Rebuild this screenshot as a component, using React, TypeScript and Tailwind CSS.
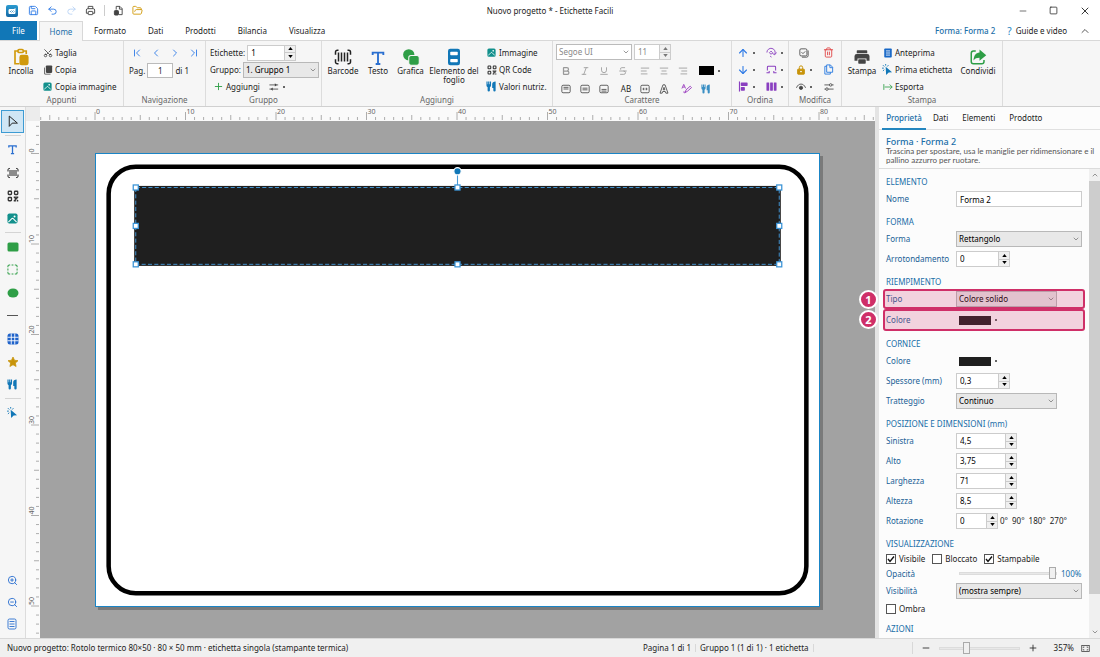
import { useState } from 'react';
import type { ReactNode } from 'react';
import {
  AlignCenter,
  AlignLeft,
  AlignRight,
  ArrowDown,
  ArrowUp,
  Bold,
  ChevronDown,
  ChevronFirst,
  ChevronLast,
  ChevronLeft,
  ChevronRight,
  ChevronUp,
  FolderOpen,
  Italic,
  Minus,
  Plus,
  Redo2,
  Save,
  Scissors,
  Square,
  Strikethrough,
  Trash2,
  Underline,
  Undo2,
  X,
  ZoomIn,
  ZoomOut,
} from 'lucide-react';

// ---------- Icons ----------

type IconProps = { className?: string };

const LogoIcon = () => (
  <svg viewBox="0 0 24 24" className="size-3">
    <defs>
      <linearGradient id="logo" x1="0" y1="0" x2="0" y2="1">
        <stop offset="0" stopColor="#2b9bd0" />
        <stop offset="1" stopColor="#1468a6" />
      </linearGradient>
    </defs>
    <rect width="24" height="24" rx="4" fill="url(#logo)" />
    <path d="M5 11c0-2 1-3 3-3h8l3-2v9c0 2-1 3-3 3H8c-2 0-3-1-3-3z" fill="#fff" />
    <path d="M8 14l3-3M11 15l4-4M15 15l2-2" stroke="#2486bf" strokeWidth="1.6" />
  </svg>
);

const PrinterIcon = () => (
  <svg viewBox="0 0 24 24" className="size-[18px] text-[#444]" fill="currentColor">
    <path d="M6 3h12a1 1 0 0 1 1 1v3H5V4a1 1 0 0 1 1-1z" />
    <path d="M5 8h14a3 3 0 0 1 3 3v6h-4v-3H6v3H2v-6a3 3 0 0 1 3-3z" />
    <rect x="7" y="15" width="10" height="6" rx="1" />
  </svg>
);

const PrinterOutlineIcon = () => (
  <svg viewBox="0 0 24 24" className="size-[11px] text-[#444]" fill="none" stroke="currentColor" strokeWidth="2">
    <path d="M7 8V3h10v5M7 18H3v-7a3 3 0 0 1 3-3h12a3 3 0 0 1 3 3v7h-4" />
    <rect x="7" y="14" width="10" height="7" rx="1" />
  </svg>
);

const DocBadgeIcon = () => (
  <svg viewBox="0 0 24 24" className="size-[11px] text-[#444]" fill="none" stroke="currentColor" strokeWidth="2">
    <path d="M7 10V3h8l5 5v13h-7M14 3v6h6" />
    <rect x="3" y="12" width="9" height="10" rx="2" fill="currentColor" />
  </svg>
);

const PasteIcon = () => (
  <svg viewBox="0 0 24 24" className="size-[18px]" fill="none" stroke="#d19a0c" strokeWidth="2.2">
    <path d="M8 4H4v17h6M16 4h3v4" />
    <rect x="8" y="2" width="7" height="4" rx="1.5" />
    <rect x="11" y="10" width="10" height="12" rx="2" fill="#d19a0c" />
  </svg>
);

const CopyFilledIcon = () => (
  <svg viewBox="0 0 24 24" className="size-[10px] text-[#444]" fill="currentColor">
    <rect x="7" y="1" width="15" height="18" rx="2" />
    <path d="M5 5v16h13v2H5a2 2 0 0 1-2-2V7z" />
  </svg>
);

const ImageIcon = ({ className = 'size-[9px]' }: IconProps) => (
  <svg viewBox="0 0 24 24" className={className}>
    <rect x="1" y="1" width="22" height="22" rx="4" fill="#12908c" />
    <path d="M3 20l8-8a2 2 0 0 1 2 0l8 8" fill="none" stroke="#fff" strokeWidth="2.2" />
    <circle cx="16.500" cy="7.500" r="2.200" fill="#fff" />
  </svg>
);

const BarcodeIcon = ({ className = 'size-[18px]' }: IconProps) => (
  <svg viewBox="0 0 24 24" className={className} fill="none" stroke="#222" strokeWidth="2">
    <path d="M6 3H4.500A2.500 2.500 0 0 0 2 5.500V9M18 3h1.500A2.500 2.500 0 0 1 22 5.500V9M6 21H4.500A2.500 2.500 0 0 1 2 18.500V15M18 21h1.500a2.500 2.500 0 0 0 2.500-2.500V15" />
    <path d="M6 6v12M10 6v12M14 6v12M18 6v12" />
  </svg>
);

const TextIcon = ({ className = 'size-4' }: IconProps) => (
  <svg viewBox="0 0 24 24" className={className} fill="none" stroke="#2a6fd0" strokeWidth="2.8">
    <path d="M4 7.500V4h16v3.500M12 4v17M8.500 21h7" />
  </svg>
);

const QrIcon = ({ className = 'size-[10px]' }: IconProps) => (
  <svg viewBox="0 0 24 24" className={className} fill="none" stroke="#333" strokeWidth="2.6">
    <rect x="2.500" y="2.500" width="6.500" height="6.500" rx="1.500" />
    <rect x="15" y="2.500" width="6.500" height="6.500" rx="1.500" />
    <rect x="2.500" y="15" width="6.500" height="6.500" rx="1.500" />
    <path d="M13.500 14.500h3v3h3v-3h3M13.500 21.500h3v-3M19.500 21.500h3" />
  </svg>
);

const ShapesIcon = () => (
  <svg viewBox="0 0 24 24" className="size-[18px]" fill="#2e9e46">
    <circle cx="9" cy="9" r="7.500" />
    <rect x="9" y="10" width="14" height="13" rx="3" stroke="#f6f6f6" strokeWidth="1.400" />
  </svg>
);

const SheetIcon = () => (
  <svg viewBox="0 0 24 24" className="size-[18px]">
    <rect x="4" y="1" width="16" height="22" rx="3" fill="#1177b7" />
    <rect x="7" y="5" width="10" height="4.500" rx="1" fill="#fff" />
    <rect x="7" y="14.500" width="10" height="4.500" rx="1" fill="#fff" />
  </svg>
);

const ForkKnifeIcon = ({ className = 'size-[11px] text-[#1177b7]' }: IconProps) => (
  <svg viewBox="0 0 24 24" className={className} fill="currentColor">
    <path d="M1 1h2.500v6h1.200V1h2.600v6h1.200V1H11v9a4 4 0 0 1-2.500 3.500v7a2.500 2.500 0 0 1-5 0v-7A4 4 0 0 1 1 10z" />
    <path d="M21 1v19.500a2.500 2.500 0 0 1-5 0V15h-2.500V7c0-4 3-6 7.500-6z" />
  </svg>
);

const SwapIcon = () => (
  <svg viewBox="0 0 24 24" className="size-[10px] text-[#444]" fill="none" stroke="currentColor" strokeWidth="2">
    <path d="M1 7h21M1 17h21" />
    <path d="M14 3v8l5-4zM9 13v8l-5-4z" fill="currentColor" stroke="none" />
  </svg>
);

const SlidersIcon = () => (
  <svg viewBox="0 0 24 24" className="size-[10px] text-[#444]" fill="none" stroke="currentColor" strokeWidth="2">
    <path d="M1 7h12M19 7h4M1 17h3M10 17h13" />
    <circle cx="16" cy="7" r="3" />
    <circle cx="7" cy="17" r="3" />
  </svg>
);

const SelectAllIcon = () => (
  <svg viewBox="0 0 24 24" className="size-[10px]" fill="none" stroke="#444" strokeWidth="2">
    <rect x="2" y="2" width="17" height="17" rx="3" />
    <path d="M6 10l3.500 3.500L15 8M22 6v12a4 4 0 0 1-4 4H7" />
  </svg>
);

const ClickIcon = ({ className = 'size-[11px]' }: IconProps) => (
  <svg viewBox="0 0 24 24" className={className}>
    <path d="M8 6l14 12-7.500.5L9 24z" fill="#1177b7" />
    <path d="M8 0v3.500M2 2.500l3 3M0 9h4M14 2.500l-2.500 3M2 15l3-2.500" stroke="#1177b7" strokeWidth="2" />
  </svg>
);

const PreviewIcon = () => (
  <svg viewBox="0 0 24 24" className="size-[10px]">
    <rect x="3" y="1" width="18" height="22" rx="2" fill="#1767c6" />
    <path d="M7 7h10M7 12h10M7 17h10" stroke="#fff" strokeWidth="2" />
  </svg>
);

const ExportIcon = () => (
  <svg viewBox="0 0 24 24" className="size-[10px]" fill="none" stroke="#2e9e46" strokeWidth="2">
    <path d="M2 5v14M4 12h18M16 6l6 6-6 6" />
  </svg>
);

const ShareIcon = () => (
  <svg viewBox="0 0 24 24" className="size-[18px]">
    <path d="M9 4H6a3 3 0 0 0-3 3v11a3 3 0 0 0 3 3h11a3 3 0 0 0 3-3v-2" fill="none" stroke="#2e9e46" strokeWidth="2" />
    <path d="M14 2l9 7.500-9 7.500v-4c-4 0-6 1-8 3.500C6.500 10 9 6.500 14 6z" fill="#2e9e46" />
  </svg>
);

const RotateIcon = () => (
  <svg viewBox="0 0 24 24" className="size-[11px]" fill="none" stroke="#8a3fc0" strokeWidth="2">
    <path d="M2 12a9 9 0 1 1 17 4M23 12l-4 5-5-3" />
    <path d="M11 9l3.500 3.500L11 16l-3.500-3.500zM9 20l3 2" />
  </svg>
);

const FlipIcon = () => (
  <svg viewBox="0 0 24 24" className="size-[11px]" fill="none" stroke="#8a3fc0" strokeWidth="2.200">
    <path d="M3 14V7a2 2 0 0 1 2-2h14a2 2 0 0 1 2 2v7M1 19h6v-4M23 19h-6v-4" />
  </svg>
);

const AlignObjectsIcon = () => (
  <svg viewBox="0 0 24 24" className="size-[11px]" fill="#8a3fc0">
    <rect x="2" y="1" width="2.500" height="22" />
    <rect x="6" y="3" width="15" height="8" rx="1.500" />
    <rect x="6" y="13" width="9" height="8" rx="1.500" />
  </svg>
);

const DistributeIcon = () => (
  <svg viewBox="0 0 24 24" className="size-[11px]" fill="#8a3fc0">
    <rect x="1" y="3" width="6" height="18" rx="1" />
    <rect x="9" y="3" width="6" height="18" rx="1" />
    <rect x="17" y="3" width="6" height="18" rx="1" />
  </svg>
);

const LockIcon = () => (
  <svg viewBox="0 0 24 24" className="size-[10px]" fill="none" stroke="#c8940a" strokeWidth="2.400">
    <path d="M8 10V6a4 4 0 0 1 8 0v4" />
    <rect x="4" y="10" width="16" height="12" rx="1" fill="#c8940a" />
    <circle cx="12" cy="16" r="1" fill="#fff" stroke="#fff" />
  </svg>
);

const EyeIcon = () => (
  <svg viewBox="0 0 24 24" className="size-[10px]" fill="none" stroke="#444" strokeWidth="2">
    <path d="M1 14C4 7 8 5 12 5s8 2 11 9" />
    <circle cx="12" cy="14" r="4" fill="#444" />
  </svg>
);

const DuplicateIcon = () => (
  <svg viewBox="0 0 24 24" className="size-[11px]" fill="none" stroke="#2a7be0" strokeWidth="2">
    <path d="M8 2h8l5 5v11H8zM15 2v6h6M8 5H4v17h12v-4" />
  </svg>
);

// Text box with its lines at the top, in the middle or at the bottom
const BoxIcon = ({ lines }: { lines: string }) => (
  <svg viewBox="0 0 24 24" className="size-[10px] text-[#444]" fill="none" stroke="currentColor" strokeWidth="2">
    <rect x="2" y="3" width="20" height="18" rx="3" />
    <path d={lines} />
  </svg>
);

const OutlineAIcon = () => (
  <svg viewBox="0 0 24 24" className="size-[10px]" fill="none" stroke="#444" strokeWidth="2">
    <path d="M9.500 2h5l7 20h-5l-1.500-4H9l-1.500 4h-5zM12 8l-2 6h4z" />
  </svg>
);

const PenStyleIcon = () => (
  <svg viewBox="0 0 24 24" className="size-[11px]" fill="none" stroke="#9b3fc0" strokeWidth="2">
    <path d="M2 12L6 3l4 9M4 9h4M9 21l2-6 9-8 3 3-9 8zM9 21c-3 1-4-1-2-3" />
  </svg>
);

const CursorIcon = () => (
  <svg viewBox="0 0 24 24" className="size-[13px]" fill="none" stroke="#222" strokeWidth="1.800" strokeLinejoin="round">
    <path d="M6 2v19l5.500-6H21z" />
  </svg>
);

const RectIcon = () => (
  <svg viewBox="0 0 24 24" className="size-3">
    <rect x="1" y="3" width="22" height="18" rx="3" fill="#2e9e46" />
  </svg>
);

const DashedRectIcon = () => (
  <svg viewBox="0 0 24 24" className="size-[11px]" fill="none" stroke="#2e9e46" strokeWidth="2.200">
    <path d="M2 7V5a3 3 0 0 1 3-3h2M17 2h2a3 3 0 0 1 3 3v2M22 17v2a3 3 0 0 1-3 3h-2M7 22H5a3 3 0 0 1-3-3v-2M10 2h4M10 22h4M2 10v4M22 10v4" />
  </svg>
);

const EllipseIcon = () => (
  <svg viewBox="0 0 24 24" className="size-3">
    <ellipse cx="12" cy="12" rx="11" ry="9" fill="#2e9e46" />
  </svg>
);

const TableIcon = () => (
  <svg viewBox="0 0 24 24" className="size-3">
    <rect x="1" y="1" width="22" height="22" rx="5" fill="#1f62c9" />
    <path d="M8.500 1v22M15.500 1v22M1 8.500h22M1 15.500h22" stroke="#fff" strokeWidth="1.800" />
  </svg>
);

const StarIcon = () => (
  <svg viewBox="0 0 24 24" className="size-3" fill="#c8940a" stroke="#c8940a" strokeWidth="1.500" strokeLinejoin="round">
    <path d="M12 2l3 6.500 7 .8-5.200 4.800L18.200 21 12 17.500 5.800 21l1.400-6.900L2 9.300l7-.8z" />
  </svg>
);

const ListIcon = () => (
  <svg viewBox="0 0 24 24" className="size-3" fill="none" stroke="#2a6fd0" strokeWidth="1.800">
    <rect x="4" y="2" width="16" height="20" rx="3" />
    <path d="M7 7h10M7 12h10M7 17h10" />
  </svg>
);

const FitIcon = () => (
  <svg viewBox="0 0 24 24" className="size-[9px]" fill="none" stroke="#333" strokeWidth="2">
    <rect x="2" y="4" width="20" height="16" />
    <path d="M6 10V8h3M15 8h3v2M18 14v2h-3M9 16H6v-2" />
  </svg>
);

// ---------- Small controls ----------

const Dot = () => <span className="size-[2px] shrink-0 bg-[#666]" />;

type SpinProps = { id: string; value: string; width: string; label?: string; muted?: boolean };

function Spin({ id, value, width, label, muted }: SpinProps) {
  const [text, setText] = useState(value);
  const step = (by: number) => setText(String(Number(text.replace(',', '.')) + by).replace('.', ','));
  return (
    <span className="flex h-4 items-stretch">
      <input
        id={id}
        aria-label={label}
        value={text}
        onChange={(e) => setText(e.target.value)}
        className={`${width} ${muted ? 'text-[#888]' : 'text-black'} border border-[#ccc] bg-white px-[3px] outline-none`}
      />
      <span className="flex w-[11px] flex-col border border-l-0 border-[#ccc] bg-[#f0f0f0]">
        <button aria-label="Aumenta" onClick={() => step(1)} className="flex flex-1 items-center justify-center border-b border-[#ccc]">
          <svg viewBox="0 0 6 4" className={`h-[3px] w-[5px] ${muted ? 'fill-[#777]' : 'fill-black'}`}><path d="M3 0l3 4H0z" /></svg>
        </button>
        <button aria-label="Diminuisci" onClick={() => step(-1)} className="flex flex-1 items-center justify-center">
          <svg viewBox="0 0 6 4" className={`h-[3px] w-[5px] ${muted ? 'fill-[#777]' : 'fill-black'}`}><path d="M3 4l3-4H0z" /></svg>
        </button>
      </span>
    </span>
  );
}

type DropProps = { id: string; value: string; width: string; label?: string; look?: string };

function Drop({ id, value, width, label, look = 'border-[#b8b8b8] bg-[#e8e8e8] text-black' }: DropProps) {
  return (
    <span className={`relative flex h-4 ${width}`}>
      <select id={id} aria-label={label} className={`h-full w-full appearance-none border px-[2px] outline-none ${look}`}>
        <option>{value}</option>
      </select>
      <ChevronDown className="pointer-events-none absolute top-1 right-[2px] size-2 text-[#666]" />
    </span>
  );
}

// ---------- Title bar and tabs ----------

function TitleBar() {
  return (
    <header className="grid h-[21px] shrink-0 grid-cols-[1fr_auto_1fr] items-center bg-white">
      <div className="flex items-center gap-2 pl-[6px]">
        <LogoIcon />
        <span className="flex items-center gap-2 pl-[2px]">
          <button aria-label="Salva"><Save className="size-[11px] text-[#2f7be6]" /></button>
          <button aria-label="Annulla"><Undo2 className="size-[11px] text-[#2f7be6]" /></button>
          <button aria-label="Ripeti"><Redo2 className="size-[11px] text-[#b9d3f5]" /></button>
          <button aria-label="Stampa"><PrinterOutlineIcon /></button>
          <span className="h-[11px] w-px bg-[#ccc]" />
          <button aria-label="Documento"><DocBadgeIcon /></button>
          <button aria-label="Apri"><FolderOpen className="size-[11px] text-[#d19a0c]" /></button>
        </span>
      </div>
      <h1>Nuovo progetto * - Etichette Facili</h1>
      <div className="flex justify-end">
        <button aria-label="Riduci" className="flex w-[31px] items-center justify-center"><Minus className="size-[10px]" strokeWidth={1.5} /></button>
        <button aria-label="Ingrandisci" className="flex w-[31px] items-center justify-center"><Square className="size-[9px]" strokeWidth={2} /></button>
        <button aria-label="Chiudi" className="flex w-[31px] items-center justify-center"><X className="size-3" strokeWidth={1.8} /></button>
      </div>
    </header>
  );
}

const tabs = ['Formato', 'Dati', 'Prodotti', 'Bilancia', 'Visualizza'];

function TabBar() {
  return (
    <nav className="flex h-5 shrink-0 items-stretch border-b border-[#d8d8d8] bg-white">
      <button className="w-[37px] bg-[#1177b7] text-white">File</button>
      <button className="-mb-px ml-[2px] w-11 border border-b-0 border-[#d8d8d8] bg-[#f6f6f6] text-[#1a6ea8]">Home</button>
      {tabs.map((tab) => (
        <button key={tab} className="px-[11px]">{tab}</button>
      ))}
      <div className="ml-auto flex items-center gap-3 pr-[9px]">
        <span className="font-medium text-[#1a6ea8]">Forma: Forma 2</span>
        <a href="#guide" className="flex items-center gap-1"><span className="text-[10px] text-[#2486bf]">?</span>Guide e video</a>
        <button aria-label="Comprimi"><ChevronUp className="size-3" strokeWidth={1.5} /></button>
      </div>
    </nav>
  );
}

// ---------- Ribbon ----------

function Group({ title, width, children }: { title: string; width: string; children: ReactNode }) {
  return (
    <section className={`flex shrink-0 flex-col border-r border-[#dcdcdc] ${width}`}>
      <div className="flex h-[54px] pt-[3px]">{children}</div>
      <h2 className="h-[9px] text-center leading-[9px] text-[#666]">{title}</h2>
    </section>
  );
}

function BigButton({ icon, label, width, menu }: { icon: ReactNode; label: string; width: string; menu?: boolean }) {
  return (
    <button className={`flex shrink-0 flex-col items-center ${width}`}>
      <span className="flex h-[22px] items-end">{icon}</span>
      <span className="leading-[9px]">{label}</span>
      {menu && <span className="mt-1"><Dot /></span>}
    </button>
  );
}

function SmallButton({ icon, label }: { icon: ReactNode; label: string }) {
  return (
    <button className="flex h-[17px] items-center gap-[2px] whitespace-nowrap">
      <span className="flex w-[11px] justify-center">{icon}</span>
      {label}
    </button>
  );
}

function IconButton({ label, children, menu, width = 'w-[19px]' }: { label: string; children: ReactNode; menu?: boolean; width?: string }) {
  return (
    <button aria-label={label} className={`flex h-[17px] shrink-0 items-center justify-center gap-1 ${width}`}>
      {children}
      {menu && <Dot />}
    </button>
  );
}

function Ribbon() {
  return (
    <div className="flex h-[66px] shrink-0 overflow-hidden border-b border-[#d0d0d0] bg-[#f6f6f6]">
      <Group title="Appunti" width="w-[124px]">
        <BigButton icon={<PasteIcon />} label="Incolla" width="w-[42px]" />
        <div>
          <SmallButton icon={<Scissors className="size-[10px] -rotate-90 text-[#444]" />} label="Taglia" />
          <SmallButton icon={<CopyFilledIcon />} label="Copia" />
          <SmallButton icon={<ImageIcon />} label="Copia immagine" />
        </div>
      </Group>

      <Group title="Navigazione" width="w-[82px]">
        <div className="w-full px-[3px]">
          <div className="flex h-[17px] justify-around text-[#2f7be6]">
            <IconButton label="Prima"><ChevronFirst className="size-3" strokeWidth={1.8} /></IconButton>
            <IconButton label="Precedente"><ChevronLeft className="size-3" strokeWidth={1.8} /></IconButton>
            <IconButton label="Successiva"><ChevronRight className="size-3" strokeWidth={1.8} /></IconButton>
            <IconButton label="Ultima"><ChevronLast className="size-3" strokeWidth={1.8} /></IconButton>
          </div>
          <label className="mt-px flex h-[17px] items-center gap-[2px] pl-[2px]">
            Pag.
            <input defaultValue="1" className="h-[15px] w-[26px] border border-[#bbb] bg-white text-center outline-none" />
            di 1
          </label>
        </div>
      </Group>

      <Group title="Gruppo" width="w-[116px]">
        <div className="w-full pr-[2px] pl-1">
          <div className="flex h-[17px] items-center gap-[2px]">
            <label htmlFor="etichette">Etichette:</label>
            <Spin id="etichette" value="1" width="w-[38px]" />
          </div>
          <div className="flex h-[17px] items-center justify-between">
            <label htmlFor="gruppo">Gruppo:</label>
            <Drop id="gruppo" value="1. Gruppo 1" width="w-[76px]" />
          </div>
          <div className="flex h-[17px] items-center gap-2 pl-[3px]">
            <SmallButton icon={<Plus className="size-[11px] text-[#2e9e46]" />} label="Aggiungi" />
            <IconButton label="Opzioni gruppo" menu><SwapIcon /></IconButton>
          </div>
        </div>
      </Group>

      <Group title="Aggiungi" width="w-[231px]">
        <BigButton icon={<BarcodeIcon />} label="Barcode" width="w-[42px]" menu />
        <BigButton icon={<TextIcon />} label="Testo" width="w-[28px]" menu />
        <BigButton icon={<ShapesIcon />} label="Grafica" width="w-[37px]" menu />
        <BigButton icon={<SheetIcon />} label="Elemento del foglio" width="w-[50px]" menu />
        <div className="pl-[7px]">
          <SmallButton icon={<ImageIcon />} label="Immagine" />
          <SmallButton icon={<QrIcon />} label="QR Code" />
          <SmallButton icon={<ForkKnifeIcon />} label="Valori nutriz." />
        </div>
      </Group>

      <Group title="Carattere" width="w-[179px]">
        <div className="pl-[3px]">
          <div className="flex h-[17px] gap-[2px]">
            <Drop id="font" label="Carattere" value="Segoe UI" width="w-[76px]" look="border-[#bbb] bg-white text-[#888]" />
            <Spin id="corpo" label="Dimensione" value="11" width="w-[26px]" muted />
          </div>
          <div className="flex h-[19px] items-center text-[#999]">
            <IconButton label="Grassetto"><Bold className="size-[10px]" strokeWidth={3} /></IconButton>
            <IconButton label="Corsivo"><Italic className="size-[10px]" /></IconButton>
            <IconButton label="Sottolineato"><Underline className="size-[10px]" /></IconButton>
            <IconButton label="Barrato"><Strikethrough className="size-[10px]" /></IconButton>
            <span className="w-[3px]" />
            <IconButton label="A sinistra"><AlignLeft className="size-[10px]" /></IconButton>
            <IconButton label="Al centro"><AlignCenter className="size-[10px]" /></IconButton>
            <IconButton label="A destra"><AlignRight className="size-[10px]" /></IconButton>
            <IconButton label="Colore" menu width="w-[34px]"><span className="h-[9px] w-[15px] bg-black" /></IconButton>
          </div>
          <div className="flex h-[17px] items-center">
            <IconButton label="In alto"><BoxIcon lines="M6 8h12M6 12h12" /></IconButton>
            <IconButton label="In mezzo"><BoxIcon lines="M6 10h12M6 14h12" /></IconButton>
            <IconButton label="In basso"><BoxIcon lines="M6 13h12M6 17h12" /></IconButton>
            <IconButton label="Maiuscole" width="w-[26px]">AB</IconButton>
            <IconButton label="Adatta" width="w-3"><BoxIcon lines="M6 12h4M14 12h4M9 9v6M15 9v6" /></IconButton>
            <IconButton label="Contorno" width="w-[26px]"><OutlineAIcon /></IconButton>
            <IconButton label="Stile"><PenStyleIcon /></IconButton>
            <IconButton label="Allergeni"><ForkKnifeIcon className="size-[10px] text-[#3a8fc4]" /></IconButton>
          </div>
        </div>
      </Group>

      <Group title="Ordina" width="w-[57px]">
        <div className="grid w-full grid-cols-2">
          <IconButton label="Porta avanti" menu width="w-full"><ArrowUp className="size-3 text-[#2f7be6]" strokeWidth={2.2} /></IconButton>
          <IconButton label="Ruota" menu width="w-full"><RotateIcon /></IconButton>
          <IconButton label="Porta indietro" menu width="w-full"><ArrowDown className="size-3 text-[#2f7be6]" strokeWidth={2.2} /></IconButton>
          <IconButton label="Rifletti" menu width="w-full"><FlipIcon /></IconButton>
          <IconButton label="Allinea" menu width="w-full"><AlignObjectsIcon /></IconButton>
          <IconButton label="Distribuisci" menu width="w-full"><DistributeIcon /></IconButton>
        </div>
      </Group>

      <Group title="Modifica" width="w-[53px]">
        <div className="grid w-full grid-cols-2 pl-[2px]">
          <IconButton label="Seleziona" width="w-full"><SelectAllIcon /></IconButton>
          <IconButton label="Elimina" width="w-full"><Trash2 className="size-[11px] text-[#e04848]" /></IconButton>
          <IconButton label="Blocca" menu width="w-full"><LockIcon /></IconButton>
          <IconButton label="Duplica" width="w-full"><DuplicateIcon /></IconButton>
          <IconButton label="Mostra" menu width="w-full"><EyeIcon /></IconButton>
          <IconButton label="Proprietà" width="w-full"><SlidersIcon /></IconButton>
        </div>
      </Group>

      <Group title="Stampa" width="w-[161px]">
        <BigButton icon={<PrinterIcon />} label="Stampa" width="w-[40px]" />
        <div className="w-[76px]">
          <SmallButton icon={<PreviewIcon />} label="Anteprima" />
          <SmallButton icon={<ClickIcon />} label="Prima etichetta" />
          <SmallButton icon={<ExportIcon />} label="Esporta" />
        </div>
        <BigButton icon={<ShareIcon />} label="Condividi" width="w-[40px]" />
      </Group>
    </div>
  );
}

// ---------- Left toolbar ----------

const tools: { label: string; icon: ReactNode; active?: boolean; gap?: boolean }[] = [
  { label: 'Seleziona', icon: <CursorIcon />, active: true, gap: true },
  { label: 'Testo', icon: <TextIcon className="size-[11px]" /> },
  { label: 'Barcode', icon: <BarcodeIcon className="size-3" /> },
  { label: 'QR Code', icon: <QrIcon className="size-3" /> },
  { label: 'Immagine', icon: <ImageIcon className="size-[11px]" />, gap: true },
  { label: 'Rettangolo', icon: <RectIcon /> },
  { label: 'Area', icon: <DashedRectIcon /> },
  { label: 'Ellisse', icon: <EllipseIcon /> },
  { label: 'Linea', icon: <span className="h-px w-[11px] bg-[#555]" /> },
  { label: 'Tabella', icon: <TableIcon /> },
  { label: 'Simbolo', icon: <StarIcon /> },
  { label: 'Valori nutrizionali', icon: <ForkKnifeIcon />, gap: true },
  { label: 'Azione rapida', icon: <ClickIcon /> },
];

function Toolbar() {
  return (
    <aside className="flex w-[26px] shrink-0 flex-col border-r border-[#dcdcdc] bg-[#f6f6f6] py-[3px] pl-px">
      {tools.map((tool) => (
        <div key={tool.label}>
          <button
            aria-label={tool.label}
            className={`flex h-[23px] w-[23px] items-center justify-center ${tool.active ? 'border border-[#3d9bd3] bg-[#cfe6f5]' : ''}`}
          >
            {tool.icon}
          </button>
          {tool.gap && <div className="mx-1 flex h-[5px] items-center"><hr className="w-full border-[#d4d4d4]" /></div>}
        </div>
      ))}
      <div className="mt-auto text-[#2a6fd0]">
        <button aria-label="Ingrandisci" className="flex h-[22px] w-[22px] items-center justify-center"><ZoomIn className="size-[11px]" /></button>
        <button aria-label="Riduci" className="flex h-[22px] w-[22px] items-center justify-center"><ZoomOut className="size-[11px]" /></button>
        <button aria-label="Elenco" className="flex h-[22px] w-[22px] items-center justify-center"><ListIcon /></button>
      </div>
    </aside>
  );
}

// ---------- Rulers and canvas ----------

const SCALE = 9.05; // pixels per millimetre at 357%
const ORIGIN_X = 55;
const ORIGIN_Y = 32.5;

const tickLength = (mm: number) => (mm % 10 === 0 ? 8 : mm % 5 === 0 ? 5 : 3);
const ticks = Array.from({ length: 93 }, (_, i) => i - 6);
const tens = (end: number) => ticks.filter((mm) => mm >= 0 && mm <= end && mm % 10 === 0);

function HorizontalRuler() {
  return (
    <svg className="h-[14px] w-full bg-[#fafafa]">
      {ticks.map((mm) => {
        const x = ORIGIN_X + mm * SCALE;
        return <line key={mm} x1={x} x2={x} y1={13 - tickLength(mm)} y2={13} stroke="#999" strokeWidth="0.8" />;
      })}
      {tens(80).map((mm) => (
        <text key={mm} x={ORIGIN_X + mm * SCALE + 1} y={7} fontSize="7" fill="#666">{mm}</text>
      ))}
    </svg>
  );
}

function VerticalRuler() {
  return (
    <svg className="h-full w-[14px] shrink-0 bg-[#fafafa]">
      {ticks.map((mm) => {
        const y = ORIGIN_Y + mm * SCALE;
        return <line key={mm} y1={y} y2={y} x1={13 - tickLength(mm)} x2={13} stroke="#999" strokeWidth="0.8" />;
      })}
      {tens(50).map((mm) => (
        <text key={mm} transform={`translate(8 ${ORIGIN_Y + mm * SCALE - 1}) rotate(-90)`} fontSize="7" fill="#666">{mm}</text>
      ))}
    </svg>
  );
}

const shape = { left: 4.4, top: 3.7, width: 71.2, height: 8.5 };

// Grips sit on the four corners and on the middle of every side
const grips = [0, 0.5, 1].flatMap((fx) =>
  [0, 0.5, 1].filter((fy) => fx !== 0.5 || fy !== 0.5).map((fy) => ({
    x: shape.left + shape.width * fx,
    y: shape.top + shape.height * fy,
  })),
);

function Label() {
  const middle = shape.left + shape.width / 2;
  return (
    <div className="h-[454px] w-[725px] border border-[#1a85c6] bg-white shadow-[3px_3px_0_#7a7a7a]">
      <svg viewBox="0 0 80 50" className="size-full">
        <rect x="1.4" y="1.4" width="77.2" height="47.2" rx="3" fill="none" stroke="#000" strokeWidth="0.5" />
        <rect x={shape.left} y={shape.top} width={shape.width} height={shape.height} fill="#1f1f1f" stroke="#1f1f1f" strokeWidth="0.35" />
        <rect x={shape.left} y={shape.top} width={shape.width} height={shape.height} fill="none" stroke="#4290cc" strokeWidth="0.11" strokeDasharray="0.45 0.25" />
        <line x1={middle} x2={middle} y1={1.9} y2={shape.top} stroke="#4a9bd6" strokeWidth="0.12" />
        <circle cx={middle} cy={1.9} r="0.4" fill="#1177b7" stroke="#fff" strokeWidth="0.12" />
        {grips.map((grip) => (
          <rect key={`${grip.x}-${grip.y}`} x={grip.x - 0.28} y={grip.y - 0.28} width="0.56" height="0.56" fill="#fff" stroke="#3a93d6" strokeWidth="0.14" />
        ))}
      </svg>
    </div>
  );
}

function Workspace() {
  return (
    <main className="flex min-w-0 flex-1 flex-col">
      <div className="flex">
        <div className="h-[14px] w-[14px] shrink-0 bg-[#ececec]" />
        <HorizontalRuler />
      </div>
      <div className="flex min-h-0 flex-1">
        <VerticalRuler />
        <div className="min-w-0 flex-1 overflow-hidden bg-[#a2a2a2] pt-8 pl-[55px]">
          <Label />
        </div>
      </div>
    </main>
  );
}

// ---------- Properties panel ----------

function Heading({ children }: { children: ReactNode }) {
  return <h3 className="flex h-5 items-end pb-px leading-3 text-[#1a6ea8]">{children}</h3>;
}

type RowProps = { label: string; htmlFor?: string; children: ReactNode; height?: string; step?: number };

function Row({ label, htmlFor, children, height = 'h-5', step }: RowProps) {
  return (
    <div className={`relative flex items-center ${height}`}>
      <label htmlFor={htmlFor} className="w-[70px] shrink-0 text-[#1a5f96]">{label}</label>
      {children}
      {step && (
        <div className="pointer-events-none absolute inset-y-0 -right-[3px] -left-[3px] rounded-[3px] border-2 border-[#cf2f68] bg-[#cf2f68]/20">
          <span className="absolute -top-px -left-[26px] flex size-[19px] items-center justify-center rounded-full border-2 border-white bg-[#cf2f68] text-[11px] font-bold text-white">
            {step}
          </span>
        </div>
      )}
    </div>
  );
}

function Swatch({ id }: { id: string }) {
  return (
    <button id={id} className="flex items-center gap-1 pl-[3px]">
      <span className="h-[9px] w-8 bg-[#1f1f1f]" />
      <Dot />
    </button>
  );
}

function Check({ label, checked }: { label: string; checked?: boolean }) {
  return (
    <label className="flex items-center gap-[3px]">
      <span className="relative flex">
        <input type="checkbox" defaultChecked={checked} className="peer size-[10px] appearance-none border border-[#555] bg-white" />
        <svg viewBox="0 0 10 10" className="pointer-events-none absolute inset-0 hidden size-[10px] peer-checked:block" fill="none" stroke="#111" strokeWidth="1.4">
          <path d="M2 5l2 2.500L8 2.500" />
        </svg>
      </span>
      {label}
    </label>
  );
}

const slider =
  'h-3 appearance-none bg-transparent [&::-webkit-slider-runnable-track]:h-[3px] [&::-webkit-slider-runnable-track]:border [&::-webkit-slider-runnable-track]:border-[#dcdcdc] [&::-webkit-slider-runnable-track]:bg-[#e8e8e8] [&::-webkit-slider-thumb]:-mt-[6px] [&::-webkit-slider-thumb]:h-3 [&::-webkit-slider-thumb]:w-[7px] [&::-webkit-slider-thumb]:appearance-none [&::-webkit-slider-thumb]:border [&::-webkit-slider-thumb]:border-[#aaa] [&::-webkit-slider-thumb]:bg-[#f0f0f0]';

const panelTabs = ['Dati', 'Elementi', 'Prodotto'];

function PropertiesPanel() {
  return (
    <aside className="flex w-[225px] shrink-0 flex-col border-l-4 border-[#e4e4e4] bg-[#fcfcfc]">
      <div className="flex h-[23px] shrink-0 border-b border-[#e0e0e0] pl-[3px]">
        <button className="-mb-px w-11 border-b-2 border-[#2486bf] font-medium text-[#1a6ea8]">Proprietà</button>
        {panelTabs.map((tab) => (
          <button key={tab} className="px-[7px]">{tab}</button>
        ))}
      </div>
      <div className="h-[39px] shrink-0 border-b border-[#dcdcdc] pt-[6px] pl-[7px]">
        <h2 className="text-[9px] leading-[11px] font-medium text-[#1a6ea8]">Forma · Forma 2</h2>
        <p className="font-['Lato',sans-serif] leading-[9px] text-[#555]">
          Trascina per spostare, usa le maniglie per ridimensionare e il
          <br />
          pallino azzurro per ruotare.
        </p>
      </div>
      <div className="flex min-h-0 flex-1">
        <div className="min-w-0 flex-1 px-[7px]">
          <Heading>ELEMENTO</Heading>
          <Row label="Nome" htmlFor="nome">
            <input id="nome" defaultValue="Forma 2" className="h-4 w-full border border-[#ccc] bg-white px-[3px] text-black outline-none" />
          </Row>
          <Heading>FORMA</Heading>
          <Row label="Forma" htmlFor="forma"><Drop id="forma" value="Rettangolo" width="w-full" /></Row>
          <Row label="Arrotondamento" htmlFor="arrotondamento"><Spin id="arrotondamento" value="0" width="w-[43px]" /></Row>

          <Heading>RIEMPIMENTO</Heading>
          <Row label="Tipo" htmlFor="tipo" step={1}><Drop id="tipo" value="Colore solido" width="w-[101px]" /></Row>
          <Row label="Colore" htmlFor="riempimento" height="h-[22px]" step={2}><Swatch id="riempimento" /></Row>

          <Heading>CORNICE</Heading>
          <Row label="Colore" htmlFor="cornice"><Swatch id="cornice" /></Row>
          <Row label="Spessore (mm)" htmlFor="spessore"><Spin id="spessore" value="0,3" width="w-[43px]" /></Row>
          <Row label="Tratteggio" htmlFor="tratteggio"><Drop id="tratteggio" value="Continuo" width="w-[101px]" /></Row>

          <Heading>POSIZIONE E DIMENSIONI (mm)</Heading>
          <Row label="Sinistra" htmlFor="sinistra"><Spin id="sinistra" value="4,5" width="w-[50px]" /></Row>
          <Row label="Alto" htmlFor="alto"><Spin id="alto" value="3,75" width="w-[50px]" /></Row>
          <Row label="Larghezza" htmlFor="larghezza"><Spin id="larghezza" value="71" width="w-[50px]" /></Row>
          <Row label="Altezza" htmlFor="altezza"><Spin id="altezza" value="8,5" width="w-[50px]" /></Row>
          <Row label="Rotazione" htmlFor="rotazione">
            <Spin id="rotazione" value="0" width="w-[31px]" />
            <span className="flex gap-1 pl-[2px]">
              <button>0°</button>
              <button>90°</button>
              <button>180°</button>
              <button>270°</button>
            </span>
          </Row>

          <Heading>VISUALIZZAZIONE</Heading>
          <div className="flex h-[15px] items-center gap-[7px]">
            <Check label="Visibile" checked />
            <Check label="Bloccato" />
            <Check label="Stampabile" checked />
          </div>
          <Row label="Opacità" htmlFor="opacita" height="h-[15px]">
            <input id="opacita" type="range" defaultValue={100} className={`ml-[3px] w-[98px] ${slider}`} />
            <span className="pl-1 text-[#1a6ea8]">100%</span>
          </Row>
          <Row label="Visibilità" htmlFor="visibilita"><Drop id="visibilita" value="(mostra sempre)" width="w-full" /></Row>
          <div className="flex h-[15px] items-center"><Check label="Ombra" /></div>
          <Heading>AZIONI</Heading>
        </div>
        <div className="flex w-[11px] shrink-0 flex-col items-center bg-[#f0f0f0]">
          <ChevronUp className="my-[2px] size-2 shrink-0 text-[#666]" />
          <div className="h-[88%] w-full bg-[#cdcdcd]" />
          <ChevronDown className="mt-auto mb-[2px] size-2 shrink-0 text-[#666]" />
        </div>
      </div>
    </aside>
  );
}

// ---------- Status bar ----------

function StatusBar() {
  return (
    <footer className="flex h-[19px] shrink-0 items-center border-t border-[#d8d8d8] bg-[#f0f0f0] pl-[7px]">
      <span>Nuovo progetto: Rotolo termico 80×50 · 80 × 50 mm · etichetta singola (stampante termica)</span>
      <span className="ml-auto">Pagina 1 di 1</span>
      <span className="mx-1 h-2 w-px bg-[#d8d8d8]" />
      <span>Gruppo 1 (1 di 1) · 1 etichetta</span>
      <span className="ml-1 h-2 w-px bg-[#d8d8d8]" />
      <div className="ml-[98px] flex items-center border-l border-[#d8d8d8] pl-2">
        <button aria-label="Riduci zoom"><Minus className="size-[10px]" /></button>
        <input type="range" aria-label="Zoom" defaultValue={32} className={`mx-2 w-[81px] ${slider}`} />
        <button aria-label="Aumenta zoom"><Plus className="size-[10px]" /></button>
        <span className="ml-4">357%</span>
        <button aria-label="Adatta" className="mr-[10px] ml-[7px]"><FitIcon /></button>
      </div>
    </footer>
  );
}

export default function App() {
  return (
    <div className="flex h-screen flex-col overflow-hidden bg-[#f6f6f6] font-['Noto_Sans','Open_Sans',sans-serif] text-[8px] leading-[10px] text-[#222]">
      <TitleBar />
      <TabBar />
      <Ribbon />
      <div className="flex min-h-0 flex-1">
        <Toolbar />
        <Workspace />
        <PropertiesPanel />
      </div>
      <StatusBar />
    </div>
  );
}
